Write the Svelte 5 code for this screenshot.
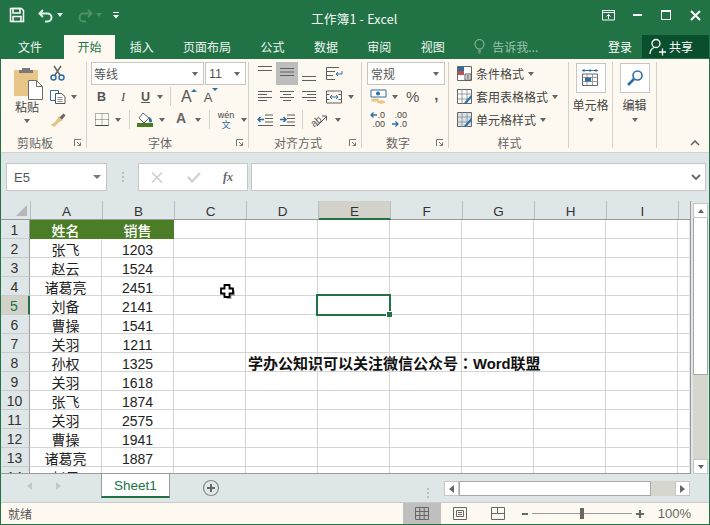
<script lang="ts">
  const tabs = ['文件', '开始', '插入', '页面布局', '公式', '数据', '审阅', '视图'];
  const cols = ['A', 'B', 'C', 'D', 'E', 'F', 'G', 'H', 'I', 'J'];
  const people = [
    ['姓名', '销售'], ['张飞', '1203'], ['赵云', '1524'], ['诸葛亮', '2451'], ['刘备', '2141'],
    ['曹操', '1541'], ['关羽', '1211'], ['孙权', '1325'], ['关羽', '1618'], ['张飞', '1874'],
    ['关羽', '2575'], ['曹操', '1941'], ['诸葛亮', '1887'], ['赵云', '1941']
  ];
  const styleRows = ['条件格式', '套用表格格式', '单元格样式'];
</script>

{#snippet launcher()}
  <svg class="launcher" width="8" height="8" viewBox="0 0 8 8"><path d="M.5 7V.5H7M3 3l3.500 3.500M6.500 3.500v3h-3" fill="none" stroke="#777"/></svg>
{/snippet}

{#snippet lines(ws, gap)}
  <svg width="16" height="14" viewBox="0 0 16 14">
    {#each ws as w, i}
      <path d="M{w[0]} {1.5 + i * gap}H{w[1]}" stroke="#5f5f5f"/>
    {/each}
  </svg>
{/snippet}

<div class="app">
  <header class="title">
    <div class="qat">
      <svg width="16" height="16" viewBox="0 0 16 16"><path d="M1.500 1.500h11l2 2v11h-13z" fill="none" stroke="#fff" stroke-width="1.500"/><path d="M4 1.500h7v4.500H4zM4 14.500V9.500h8v5" fill="none" stroke="#fff" stroke-width="1.500"/></svg>
      <svg class="undo" width="16" height="15" viewBox="0 0 16 15"><path d="M5 2 1.500 5.500 5 9M2 5.500h7.500a4 4 0 0 1 0 8H7" fill="none" stroke="#dfeee6" stroke-width="2"/></svg>
      <i class="tri white"></i>
      <svg class="redo" width="16" height="15" viewBox="0 0 16 15"><path d="M11 2l3.500 3.500L11 9M14 5.500H6.500a4 4 0 0 0 0 8H9" fill="none" stroke="#4e8f6c" stroke-width="2"/></svg>
      <i class="tri dim"></i>
      <svg class="more" width="8" height="9" viewBox="0 0 8 9"><path d="M1 1.500h6" stroke="#fff"/><path d="M1 4h6L4 7.500z" fill="#fff"/></svg>
    </div>
    <div class="doc">工作簿1 - Excel</div>
    <div class="win">
      <svg class="restore" width="14" height="11" viewBox="0 0 14 11"><path d="M.5.500h12v9.500H.5zM.5 2.500h12M6.500 9V4.500M4.500 6.500l2-2 2 2" fill="none" stroke="#fff"/></svg>
      <span class="minimize"></span>
      <span class="maximize"></span>
      <svg width="11" height="11" viewBox="0 0 11 11"><path d="M1 1l9 9M10 1l-9 9" stroke="#fff" stroke-width="2"/></svg>
    </div>
  </header>

  <nav class="tabs">
    {#each tabs as tab, i}
      <span class="tab" class:active={i === 1} class:file={i === 0}>{tab}</span>
    {/each}
    <span class="tell">
      <svg width="11" height="15" viewBox="0 0 11 15"><path d="M3.500 10C2.500 8.500 1 7.500 1 5a4.500 4.500 0 0 1 9 0c0 2.500-1.500 3.500-2.500 5zM4 12h3M4.500 14h2" fill="none" stroke="#9cc2ad"/></svg>
      告诉我...
    </span>
    <span class="login">登录</span>
    <span class="share">
      <svg width="18" height="18" viewBox="0 0 18 18"><circle cx="7" cy="5.500" r="4" fill="none" stroke="#fff" stroke-width="1.300"/><path d="M1 16c0-3.500 2-5.500 4-6.500M10 14h7M13.500 10.500v7" fill="none" stroke="#fff" stroke-width="1.300"/></svg>
      共享
    </span>
  </nav>

  <section class="ribbon">
    <div class="group clip">
      <div class="body">
        <div class="paste">
          <svg width="29" height="33" viewBox="0 0 29 33">
            <path d="M0 3h24v26H0z" fill="#e8c687"/>
            <path d="M8 3V1h8v2h3v3H5V3z" fill="#7a7a7a"/>
            <path d="M14.500 13.500h8l6 6v13h-14z" fill="#fff" stroke="#6d6d6d"/>
            <path d="M22.500 13.500v6h6" fill="none" stroke="#6d6d6d"/>
          </svg>
          <span>粘贴</span>
          <i class="tri"></i>
        </div>
        <div class="clip-tools">
          <svg width="15" height="16" viewBox="0 0 15 16"><path d="M4 1l6 9M11 1l-6 9" stroke="#666" stroke-width="1.500"/><circle cx="3.500" cy="12.500" r="2.500" fill="none" stroke="#2f6ea5" stroke-width="1.500"/><circle cx="11.500" cy="12.500" r="2.500" fill="none" stroke="#2f6ea5" stroke-width="1.500"/></svg>
          <div class="withtri">
            <svg width="16" height="14" viewBox="0 0 16 14"><path d="M.5.500h8v10h-8z" fill="#fff" stroke="#2f6ea5"/><path d="M5.500 3.500h6l3.500 3v7H5.500z" fill="#fff" stroke="#555"/><path d="M7.500 7.500h5M7.500 9.500h5M7.500 11.500h5" stroke="#888"/></svg>
            <i class="tri"></i>
          </div>
          <svg width="16" height="15" viewBox="0 0 16 15"><path d="M9 3l4 4-5 3-3.500 4-4-2 4.500-3z" fill="#e3c48c"/><path d="M9.500 4.500 13.500.500l2 2-3.500 4z" fill="#666"/></svg>
        </div>
      </div>
      <div class="label">剪贴板{@render launcher()}</div>
    </div>

    <div class="group font">
      <div class="body">
        <div class="combos">
          <span class="combo name">等线<i class="tri"></i></span>
          <span class="combo size">11<i class="tri"></i></span>
        </div>
        <div class="tool-row first">
          <b class="glyph bold">B</b>
          <em class="glyph italic">I</em>
          <span class="glyph under">U</span>
          <i class="tri"></i>
          <span class="vline"></span>
          <span class="grow">A<i class="up"></i></span>
          <span class="shrink">A<i class="down"></i></span>
        </div>
        <div class="tool-row second">
          <svg width="14" height="13" viewBox="0 0 14 13"><path d="M.5.500h13v12H.5zM7 .5v12M.5 6.500h13" fill="none" stroke="#666" stroke-dasharray="1 1"/><path d="M.5 12.500h13" stroke="#444"/></svg>
          <i class="tri"></i>
          <span class="vline"></span>
          <span class="fill-ic">
            <svg width="16" height="11" viewBox="0 0 16 11"><path d="M6 1l6 5-5 5-5-5z" fill="#fff" stroke="#666"/><path d="M12 5c2 1 3 2.500 3 4a1.500 1.500 0 0 1-3 0z" fill="#2f6ea5"/></svg>
            <i class="swatch green"></i>
          </span>
          <i class="tri"></i>
          <span class="a-ic">A<i class="swatch pale"></i></span>
          <i class="tri"></i>
          <span class="vline"></span>
          <span class="wen"><small>wén</small><span>文</span></span>
          <i class="tri"></i>
        </div>
      </div>
      <div class="label">字体{@render launcher()}</div>
    </div>

    <div class="group align">
      <div class="body">
        <div class="align-grid">
          <span class="a-cell top">{@render lines([[1, 15], [1, 15]], 4)}</span>
          <span class="a-cell mid on">{@render lines([[1, 15], [1, 15], [1, 15]], 3.5)}</span>
          <span class="a-cell bottom">{@render lines([[1, 15], [1, 15]], 4)}</span>
          <span class="a-cell wrap">
            <svg width="17" height="15" viewBox="0 0 17 15"><path d="M.5 1.500H13M.5 1.500v12H9M.5 5.500H9M.5 9.500H7" fill="none" stroke="#5f5f5f"/><path d="M16 5v3h-6M12 6l-2 2 2 2" fill="none" stroke="#2f6ea5"/></svg>
          </span>
          <span class="a-cell">{@render lines([[1, 15], [1, 10], [1, 15], [1, 10]], 3)}</span>
          <span class="a-cell">{@render lines([[1, 15], [4, 12], [1, 15], [4, 12]], 3)}</span>
          <span class="a-cell">{@render lines([[1, 15], [6, 15], [1, 15], [6, 15]], 3)}</span>
          <span class="a-cell wrap">
            <svg width="17" height="14" viewBox="0 0 17 14"><path d="M.5 1h15v12H.5zM.5 4.500h3M12.500 4.500h3M.5 9.500h3M12.500 9.500h3" fill="none" stroke="#5f5f5f"/><path d="M4 7h8M6 5 4 7l2 2M10 5l2 2-2 2" fill="none" stroke="#2f6ea5"/></svg>
            <i class="tri"></i>
          </span>
          <span class="a-cell">
            <svg width="16" height="12" viewBox="0 0 16 12"><path d="M8 1h8M8 4.500h8M8 8h8M1 11.500h15M1 1" stroke="#5f5f5f"/><path d="M7 5.500H1M3.500 3 1 5.500 3.500 8" fill="none" stroke="#2f6ea5" stroke-width="1.500"/></svg>
          </span>
          <span class="a-cell">
            <svg width="16" height="12" viewBox="0 0 16 12"><path d="M8 1h8M8 4.500h8M8 8h8M1 11.500h15" stroke="#5f5f5f"/><path d="M1 5.500h6M4.500 3 7 5.500 4.500 8" fill="none" stroke="#2f6ea5" stroke-width="1.500"/></svg>
          </span>
          <span class="a-cell orient">
            <span class="vline"></span>
            <svg width="18" height="16" viewBox="0 0 18 16"><text x="1" y="13" transform="rotate(-40 6 10)" class="ab">ab</text><path d="M7 14 16 5M12 4h4.500v4.500" fill="none" stroke="#555"/></svg>
            <i class="tri"></i>
          </span>
        </div>
      </div>
      <div class="label">对齐方式{@render launcher()}</div>
    </div>

    <div class="group number">
      <div class="body">
        <span class="combo general">常规<i class="tri"></i></span>
        <div class="num-row">
          <svg width="17" height="16" viewBox="0 0 17 16"><path d="M1 1h15v7H1z" fill="#fff" stroke="#2f6ea5"/><circle cx="8" cy="4.500" r="2" fill="#2f6ea5"/><ellipse cx="5" cy="11" rx="4" ry="1.700" fill="#e8c687"/><ellipse cx="11" cy="13" rx="4" ry="1.700" fill="#e8c687"/></svg>
          <i class="tri"></i>
          <span class="pct">%</span>
          <span class="comma">,</span>
        </div>
        <div class="num-row dec">
          <span class="dec-ic">
            <span class="dec-line"><svg width="7" height="6" viewBox="0 0 7 6"><path d="M7 3H1M3.500.5 1 3l2.500 2.500" fill="none" stroke="#2f6ea5" stroke-width="1.300"/></svg>.0</span>
            <span>.00</span>
          </span>
          <span class="dec-ic">
            <span>.00</span>
            <span class="dec-line"><svg width="7" height="6" viewBox="0 0 7 6"><path d="M0 3h6M3.500.5 6 3 3.500 5.500" fill="none" stroke="#2f6ea5" stroke-width="1.300"/></svg>.0</span>
          </span>
        </div>
      </div>
      <div class="label">数字{@render launcher()}</div>
    </div>

    <div class="group styles">
      <div class="body">
        {#each styleRows as row, i}
          <div class="style-row">
            {#if i === 0}
              <svg width="15" height="15" viewBox="0 0 15 15"><path d="M.5.500h14v14H.5z" fill="#fff" stroke="#666"/><path d="M1 1h6v4H1z" fill="#2f6ea5"/><path d="M1 5h6v4H1z" fill="#c0504d"/><path d="M8 8h6v6H8z" fill="#fff" stroke="#555"/><path d="M9.500 10h3M9.500 12h3" stroke="#333"/></svg>
            {:else}
              <svg width="15" height="15" viewBox="0 0 15 15"><path d="M.5.500h14v14H.5z" fill={i === 1 ? '#fff' : '#d6e3ef'} stroke="#666"/><path d="M5 .5v14M10 .5v14M.5 5h14M.5 10h14" stroke="#999"/><path d="M7 14 14 6l1 2-6 7z" fill="#2f6ea5"/></svg>
            {/if}
            <span>{row}</span>
            <i class="tri"></i>
          </div>
        {/each}
      </div>
      <div class="label">样式</div>
    </div>

    <div class="group big">
      <div class="body">
        <span class="bigbtn">
          <svg width="19" height="19" viewBox="0 0 19 19"><path d="M1 1.500h16M3 0v3M9 0v3M15 0v3" stroke="#2f6ea5"/><path d="M1.500 5h15v11.500h-15z" fill="#fff" stroke="#666"/><path d="M6 5v11M11.500 5v11M1.500 8.500h15M1.500 12.500h15" stroke="#999"/><path d="M4 8.500h6v4H4z" fill="#2f6ea5"/></svg>
        </span>
        <span class="biglabel">单元格</span>
        <i class="tri"></i>
      </div>
    </div>

    <div class="group big">
      <div class="body">
        <span class="bigbtn">
          <svg width="18" height="18" viewBox="0 0 18 18"><circle cx="11.500" cy="6.500" r="4.500" fill="#fff" stroke="#2f6ea5" stroke-width="1.600"/><path d="M8 10l-6 6" stroke="#2f6ea5" stroke-width="2.600"/></svg>
        </span>
        <span class="biglabel">编辑</span>
        <i class="tri"></i>
      </div>
    </div>

    <div class="collapse">
      <svg width="10" height="6" viewBox="0 0 10 6"><path d="M1 5l4-4 4 4" fill="none" stroke="#666" stroke-width="1.600"/></svg>
    </div>
  </section>

  <div class="formula">
    <div class="namebox">E5<i class="tri big-tri"></i></div>
    <span class="dots"></span>
    <div class="fx-box">
      <svg width="12" height="11" viewBox="0 0 12 11"><path d="M1 .5l10 10M11 .5l-10 10" stroke="#cfcfcf" stroke-width="1.600"/></svg>
      <svg width="14" height="11" viewBox="0 0 14 11"><path d="M1 5l4 4.500L13 1" fill="none" stroke="#cfcfcf" stroke-width="2.200"/></svg>
      <em>fx</em>
    </div>
    <div class="input">
      <svg width="10" height="6" viewBox="0 0 10 6"><path d="M1 1l4 4 4-4" fill="none" stroke="#666" stroke-width="1.800"/></svg>
    </div>
  </div>

  <div class="sheet-area">
    <div class="grid-col">
      <div class="heads">
        <span class="corner"><i></i></span>
        {#each cols as c}
          <span class="head" class:sel={c === 'E'} class:last={c === 'J'}>{c === 'J' ? '' : c}</span>
        {/each}
      </div>
      <div class="sheet">
        <div class="rows">
          {#each people as p, r}
            <div class="row">
              <span class="rownum" class:sel={r === 4}>{r + 1}</span>
              {#each cols as c, ci}
                <span class="cell" class:hdr={r === 0 && ci < 2} class:last={c === 'J'} class:mid={ci < 2}>
                  {#if ci === 0}{p[0]}{/if}
                  {#if ci === 1}{p[1]}{/if}
                  {#if r === 7 && c === 'D'}<b class="note">学办公知识可以关注微信公众号<span class="colon">：</span><span class="latin">Word</span>联盟</b>{/if}
                  {#if r === 4 && c === 'E'}<i class="selection"></i>{/if}
                  {#if r === 3 && c === 'C'}
                    <svg class="cursor" width="16" height="16" viewBox="0 0 16 16"><path d="M6.500 3h5v3.500H15v5h-3.500V15h-5v-3.500H3v-5h3.500z" fill="#000" opacity=".35"/><path d="M4.500 1h5v3.500H13v5H9.500V13h-5V9.500H1v-5h3.500z" fill="#fff" stroke="#000" stroke-width="1.800"/></svg>
                  {/if}
                </span>
              {/each}
            </div>
          {/each}
        </div>
      </div>
    </div>
    <div class="vscroll">
      <span class="sbtn"><i class="tri upt"></i></span>
      <span class="vthumb"></span>
      <span class="vtrack"></span>
      <span class="sbtn"><i class="tri"></i></span>
    </div>
  </div>

  <div class="sheetbar">
    <div class="nav">
      <i class="arrow l"></i>
      <i class="arrow r"></i>
    </div>
    <span class="sheet-tab">Sheet1</span>
    <svg class="plus" width="18" height="18" viewBox="0 0 18 18"><circle cx="9" cy="9" r="7.500" fill="none" stroke="#8a8a8a" stroke-width="1.200"/><path d="M9 5v8M5 9h8" stroke="#666" stroke-width="2"/></svg>
    <span class="dots bar-dots"></span>
    <div class="hscroll">
      <span class="hbtn"><i class="arrow l dark"></i></span>
      <span class="hthumb"></span>
      <span class="htrack"></span>
      <span class="hbtn right"><i class="arrow r dark"></i></span>
    </div>
  </div>

  <footer class="status">
    <span class="ready">就绪</span>
    <div class="views">
      <span class="view on">
        <svg width="14" height="13" viewBox="0 0 14 13"><path d="M.5.500h13v12H.5zM4.800.5v12M9.200.5v12M.5 4.500h13M.5 8.500h13" fill="none" stroke="#666"/></svg>
      </span>
      <span class="view">
        <svg width="14" height="13" viewBox="0 0 14 13"><path d="M.5.500h13v12H.5z" fill="none" stroke="#666"/><path d="M3.500 3.500h7v6h-7zM5 5.500h4M5 7.500h4" fill="none" stroke="#666"/></svg>
      </span>
      <span class="view">
        <svg width="14" height="13" viewBox="0 0 14 13"><path d="M.5.500h13v12H.5zM.5 6.500h6V.5M7 6.500h6.500" fill="none" stroke="#666"/></svg>
      </span>
    </div>
    <div class="zoom">
      <i class="zm minus"></i>
      <span class="slider"><i class="knob"></i></span>
      <i class="zm plus-z"></i>
    </div>
    <span class="pct100">100%</span>
  </footer>
</div>

<style>
  :global(body) { margin: 0; }
  .app {
    width: 710px;
    height: 525px;
    box-sizing: border-box;
    display: flex;
    flex-direction: column;
    overflow: hidden;
    background: #dfe6e7;
    border: solid #217346;
    border-width: 0 1px 1px;
    font-family: "Liberation Sans", "Noto Sans CJK SC", sans-serif;
    color: #444;
  }
  i { font-style: normal; display: inline-block; }

  /* small dropdown arrow used all over the ribbon */
  .tri {
    width: 0;
    height: 0;
    border: 3.500px solid transparent;
    border-top: 4px solid #666;
    border-bottom: 0;
  }
  .tri.white { border-top-color: #dfeee6; }
  .tri.dim { border-top-color: #4e8f6c; }
  .tri.upt { border-top: 0; border-bottom: 4px solid #666; }
  .big-tri { border-width: 4px 4px 0; border-top-color: #777; }

  .title {
    height: 35px;
    flex: none;
    background: #217346;
    margin: 0 -1px;
    display: flex;
    align-items: center;
    padding: 0 9px 5px 9px;
    box-sizing: border-box;
    color: #fff;
  }
  .qat { width: 218px; display: flex; align-items: center; }
  .undo { margin-left: 13px; }
  .qat .tri { margin-left: 3px; }
  .redo { margin-left: 14px; }
  .more { margin-left: 10px; }
  .doc {
    width: 255px;
    text-align: center;
    font-size: 12.500px;
    letter-spacing: .2px;
    font-family: "Noto Sans CJK SC", sans-serif;
    margin-top: 7px;
    color: #f4f8f6;
  }
  .win { margin-left: auto; display: flex; align-items: center; gap: 19px; }
  .restore { margin-right: -2px; }
  .minimize { width: 9px; height: 2px; background: #fff; }
  .maximize { width: 8px; height: 7px; border: 1px solid #fff; border-top-width: 2px; }

  .tabs {
    height: 24px;
    flex: none;
    display: flex;
    align-items: stretch;
    margin: 0 -1px;
    background: #217346;
    color: #fff;
    font-size: 12px;
    font-family: "Noto Sans CJK SC", sans-serif;
    padding-left: 1px;
  }
  .tab { padding: 0 14.700px 2px; display: flex; align-items: center; white-space: nowrap; color: #eef5f1; }
  .tab.file { padding: 0 22px 2px 17px; }
  .tab.active { background: #fef9f0; color: #217346; padding: 0 0 2px; width: 51px; justify-content: center; }
  .tell { margin-left: 15px; display: flex; align-items: center; gap: 7px; color: #9cc2ad; white-space: nowrap; padding-bottom: 2px; }
  .login { margin-left: auto; display: flex; align-items: center; padding: 0 10px 2px 0; white-space: nowrap; }
  .share {
    width: 68px;
    box-sizing: border-box;
    background: #0a4f2d;
    display: flex;
    align-items: center;
    gap: 2px;
    padding-left: 7px;
    margin-bottom: 1px;
    white-space: nowrap;
  }

  .ribbon {
    height: 93px;
    flex: none;
    display: flex;
    background: #fef9f0;
    border-bottom: 1px solid #d2d2cc;
    font-family: "Noto Sans CJK SC", sans-serif;
    font-size: 12px;
    position: relative;
    box-sizing: content-box;
  }
  .group {
    flex: none;
    display: flex;
    flex-direction: column;
    border-right: 1px solid #d4d2ca;
    box-sizing: border-box;
    margin-top: 3px;
    height: 86px;
  }
  .body { height: 73px; box-sizing: border-box; }
  .label {
    position: relative;
    height: 13px;
    line-height: 15px;
    text-align: center;
    color: #666;
    padding-right: 19px;
  }
  .clip .label { padding-right: 17px; }
  .styles .label { padding-right: 6px; }
  .launcher { position: absolute; right: 4px; top: 4px; }
  .vline { width: 1px; height: 19px; background: #d4d2ca; }

  .clip { width: 86px; }
  .clip .body { display: flex; padding-left: 13px; }
  .paste { width: 29px; display: flex; flex-direction: column; align-items: center; padding-top: 5px; }
  .paste svg { display: block; }
  .paste span { line-height: 14px; color: #444; margin-right: 3px; white-space: nowrap; }
  .paste .tri { margin: 5px 3px 0 0; }
  .clip-tools { margin-left: 7px; padding-top: 3px; display: flex; flex-direction: column; gap: 9px; align-items: flex-start; }
  .withtri { display: flex; align-items: center; gap: 5px; }

  .font { width: 162px; padding-left: 4px; }
  .combos { display: flex; gap: 1px; }
  .combo {
    box-sizing: border-box;
    height: 23px;
    border: 1px solid #c6c6c6;
    background: #fff;
    display: flex;
    align-items: center;
    justify-content: space-between;
    padding: 0 5px 0 2px;
    color: #555;
  }
  .name { width: 113px; }
  .size { width: 41px; font-family: "Liberation Sans", sans-serif; font-size: 12.500px; padding-left: 3px; }
  .tool-row { display: flex; align-items: center; height: 23px; }
  .tool-row.first { margin-top: 0; padding-left: 6px; height: 23px; }
  .glyph { width: 22px; font-family: "Liberation Sans", sans-serif; font-size: 12.500px; text-align: left; color: #555; }
  .bold { font-weight: 700; }
  .italic { font-family: "Liberation Serif", serif; font-size: 13px; padding-left: 2px; width: 20px; }
  .under { text-decoration: underline; font-weight: 700; width: 15px; padding-left: 0; }
  .first .tri { margin-left: 1px; }
  .first .vline { margin: 0 0 0 7px; }
  .grow, .shrink { position: relative; font-family: "Liberation Sans", sans-serif; color: #555; }
  .grow { font-size: 16px; margin-left: 10px; }
  .shrink { font-size: 13px; margin-left: 12px; top: 1px; }
  .up, .down { position: absolute; right: -5px; top: 0; width: 0; height: 0; border: 3px solid transparent; }
  .up { border-top: 0; border-bottom: 3px solid #2f6ea5; top: 1px; }
  .down { border-bottom: 0; border-top: 3px solid #2f6ea5; top: -2px; right: -6px; }
  .second { padding-left: 4px; }
  .second .tri { margin-left: 6px; }
  .second .vline { margin: 0 7px 0 8px; }
  .fill-ic { display: flex; flex-direction: column; width: 16px; align-items: center; gap: 0; }
  .swatch { display: block; width: 16px; height: 4px; }
  .swatch.green { background: #4a7b25; }
  .swatch.pale { background: #fff; }
  .a-ic { margin-left: 8px; width: 16px; text-align: center; font: 700 14px/12px "Liberation Sans", sans-serif; color: #666; }
  .wen { display: flex; flex-direction: column; align-items: center; width: 18px; line-height: 10px; font-size: 9px; color: #2f6ea5; }
  .wen small { font: 9px/10px "Liberation Sans", sans-serif; color: #444; }

  .align { width: 113px; padding-left: 5px; }
  .align-grid { display: grid; grid-template-columns: 22px 22px 22px auto; grid-auto-rows: 23px; }
  .a-cell { display: flex; align-items: center; justify-content: center; }
  .a-cell.top { align-items: flex-start; padding-top: 3px; box-sizing: border-box; }
  .a-cell.bottom { align-items: flex-start; padding-top: 13px; box-sizing: border-box; }
  .a-cell.on { background: #bdbdbd; }
  .a-cell.wrap { justify-content: flex-start; padding-left: 6px; gap: 5px; }
  .orient { grid-column: span 2; justify-content: flex-start; gap: 7px; padding-left: 4px; }
  .ab { font: 10px "Liberation Sans", sans-serif; fill: #555; }

  .number { width: 87px; padding-left: 5px; }
  .general { width: 78px; padding-left: 3px; }
  .num-row { display: flex; align-items: center; height: 23px; padding-left: 3px; }
  .num-row .tri { margin-left: 5px; }
  .pct { font: 15px "Liberation Sans", sans-serif; color: #555; margin-left: 8px; }
  .comma { font: 700 15px "Liberation Sans", sans-serif; color: #555; margin: -5px 0 0 15px; }
  .dec { gap: 7px; }
  .dec-ic { display: flex; flex-direction: column; align-items: flex-end; width: 15px; font: 9px/9px "Liberation Sans", sans-serif; color: #444; white-space: nowrap; }
  .dec-line { display: flex; align-items: center; }

  .styles { width: 120px; padding-left: 8px; }
  .style-row { display: flex; align-items: center; height: 23px; color: #444; }
  .style-row span { margin-left: 4px; white-space: nowrap; }
  .style-row .tri { margin-left: 4px; }

  .big { width: 44px; }
  .big .body { display: flex; flex-direction: column; align-items: center; height: 100%; padding-top: 1px; }
  .bigbtn { box-sizing: border-box; width: 30px; height: 30px; flex: none; border: 1px solid #c6c6c6; background: #fff; display: flex; align-items: center; justify-content: center; }
  .biglabel { line-height: 18px; margin-top: 3px; white-space: nowrap; }
  .big .tri { margin-top: 4px; }
  .collapse { margin-left: auto; align-self: flex-end; padding: 0 9px 6px 0; line-height: 0; }

  .formula {
    flex: none;
    height: 28px;
    margin-top: 10px;
    display: flex;
    align-items: stretch;
    padding: 0 3px 0 5px;
  }
  .namebox {
    width: 101px;
    box-sizing: border-box;
    background: #fff;
    border: 1px solid #c6c6c6;
    display: flex;
    align-items: center;
    justify-content: space-between;
    padding: 0 5px 0 7px;
    font-size: 13px;
    color: #555;
  }
  .dots { width: 2px; align-self: center; height: 10px; margin: 0 14px 0 15px; background: repeating-linear-gradient(#bdbdbd 0 2px, transparent 2px 4px); }
  .fx-box {
    width: 110px;
    box-sizing: border-box;
    background: #fff;
    border: 1px solid #c6c6c6;
    display: flex;
    align-items: center;
    padding-left: 12px;
    gap: 24px;
  }
  .fx-box em { font: italic 700 12px "Liberation Serif", serif; color: #666; margin-left: -2px; }
  .input {
    flex: 1;
    margin-left: 3px;
    box-sizing: border-box;
    background: #fff;
    border: 1px solid #c6c6c6;
    display: flex;
    align-items: center;
    justify-content: flex-end;
    padding-right: 4px;
  }

  .sheet-area { flex: none; height: 273px; margin-top: 10px; display: flex; }
  .grid-col { width: 689px; display: flex; flex-direction: column; border-right: 1px solid #9a9a9a; box-sizing: content-box; }
  .heads { height: 18px; flex: none; display: flex; font-size: 13.500px; color: #333; border-bottom: 1px solid #9a9a9a; box-sizing: content-box; }
  .corner { width: 29px; position: relative; flex: none; border-right: 1px solid #b8bcbc; }
  .corner i { position: absolute; right: 3px; bottom: 3px; width: 0; height: 0; border-left: 11px solid transparent; border-bottom: 11px solid #b5b8b8; }
  .head { width: 72px; box-sizing: border-box; flex: none; text-align: center; line-height: 22px; border-right: 1px solid #b8bcbc; }
  .head.sel { background: #d2d2ca; border-bottom: 2px solid #217346; height: 19px; }
  .head.last { width: 11px; border-right: 0; }
  .sheet { flex: 1; overflow: hidden; border-bottom: 1px solid #9a9a9a; }
  .rows { display: flex; flex-direction: column; }
  .row { display: flex; height: 19px; flex: none; }
  .rownum {
    width: 29px;
    box-sizing: border-box;
    flex: none;
    text-align: center;
    line-height: 21px;
    font-size: 14px;
    color: #333;
    border-right: 1px solid #9a9a9a;
    border-bottom: 1px solid #c8cccc;
    padding-right: 1px;
  }
  .rownum.sel { background: #d2d2ca; border-right: 2px solid #217346; color: #217346; }
  .cell {
    width: 72px;
    flex: none;
    box-sizing: border-box;
    background: #fff;
    border-right: 1px solid #d4d4d4;
    border-bottom: 1px solid #d4d4d4;
    font-size: 14px;
    line-height: 22px;
    color: #222;
    white-space: nowrap;
    position: relative;
    font-family: "Liberation Sans", "Noto Sans CJK SC", sans-serif;
  }
  .cell.mid { text-align: center; }
  .cell.last { width: 11px; border-right: 0; }
  .cell.hdr { background: #4b7c26; color: #fff; border-color: #4b7c26; border-right-color: #4b7c26; font-weight: 500; }
  .note { position: absolute; left: 2px; top: -1px; color: #111; z-index: 2; font-size: 15px; }
  .colon { font-family: "Noto Sans CJK TC", sans-serif; }
  .latin { font-size: 14.800px; }
  .selection {
    position: absolute;
    left: -2px;
    top: -2px;
    width: 75px;
    height: 22px;
    box-sizing: border-box;
    border: 2px solid #217346;
    z-index: 3;
  }
  .selection::after {
    content: '';
    position: absolute;
    right: -3px;
    bottom: -3px;
    width: 5px;
    height: 5px;
    background: #217346;
    border: 1px solid #fff;
    border-width: 1px 0 0 1px;
  }
  .cursor { position: absolute; left: 46px; top: 7px; z-index: 4; }

  .vscroll { width: 15px; margin: 2px 0 0 2px; display: flex; flex-direction: column; height: 271px; }
  .sbtn { height: 15px; flex: none; background: #fff; border: 1px solid #c6c6c6; box-sizing: border-box; display: flex; align-items: center; justify-content: center; }
  .vthumb { height: 157px; flex: none; background: #fff; border: 1px solid #a8a8a8; border-top: 0; box-sizing: border-box; }
  .vtrack { flex: 1; background: #d6d6cf; }

  .sheetbar { flex: none; height: 28px; display: flex; align-items: flex-start; position: relative; }
  .nav { width: 100px; height: 24px; display: flex; align-items: center; gap: 24px; padding-left: 26px; box-sizing: border-box; }
  .arrow { width: 0; height: 0; border: 4px solid transparent; }
  .arrow.l { border-left: 0; border-right: 5px solid #c4c8c8; }
  .arrow.r { border-right: 0; border-left: 5px solid #c4c8c8; }
  .arrow.l.dark { border-right-color: #666; }
  .arrow.r.dark { border-left-color: #666; }
  .sheet-tab {
    width: 69px;
    height: 24px;
    box-sizing: border-box;
    background: #fff;
    border: solid #9a9a9a;
    border-width: 0 1px;
    border-bottom: 2px solid #217346;
    color: #217346;
    font-size: 13.500px;
    text-align: center;
    line-height: 23px;
  }
  .plus { margin: 5px 0 0 32px; }
  .bar-dots { margin: 9px 0 0 207px; }
  .hscroll { position: absolute; left: 443px; top: 7px; width: 246px; height: 15px; display: flex; }
  .hbtn { width: 15px; height: 15px; flex: none; box-sizing: border-box; background: #fff; border: 1px solid #c6c6c6; display: flex; align-items: center; justify-content: center; }
  .hthumb { width: 192px; flex: none; background: #fff; border: 1px solid #a8a8a8; box-sizing: border-box; }
  .htrack { flex: 1; background: #d6d6cf; }

  .status {
    flex: 1;
    display: flex;
    align-items: center;
    background: #fef9f0;
    border-top: 1px solid #c8cccc;
    font-family: "Noto Sans CJK SC", sans-serif;
    font-size: 12px;
  }
  .ready { margin-left: 7px; width: 395px; color: #555; }
  .views { display: flex; align-self: stretch; }
  .view { width: 38px; display: flex; align-items: center; justify-content: center; }
  .view.on { background: #bfbfbf; }
  .zoom { display: flex; align-items: center; margin-left: 5px; }
  .zm { position: relative; width: 6px; height: 2px; background: #666; }
  .plus-z { width: 8px; }
  .plus-z::after { content: ''; position: absolute; left: 3px; top: -3px; width: 2px; height: 8px; background: #666; }
  .slider { position: relative; width: 100px; height: 1px; background: #9a9a9a; margin: 0 4px; }
  .knob { position: absolute; left: 48px; top: -5px; width: 4px; height: 11px; background: #666; }
  .pct100 { margin-left: auto; padding-right: 18px; font: 13px "Liberation Sans", sans-serif; color: #666; }
</style>
